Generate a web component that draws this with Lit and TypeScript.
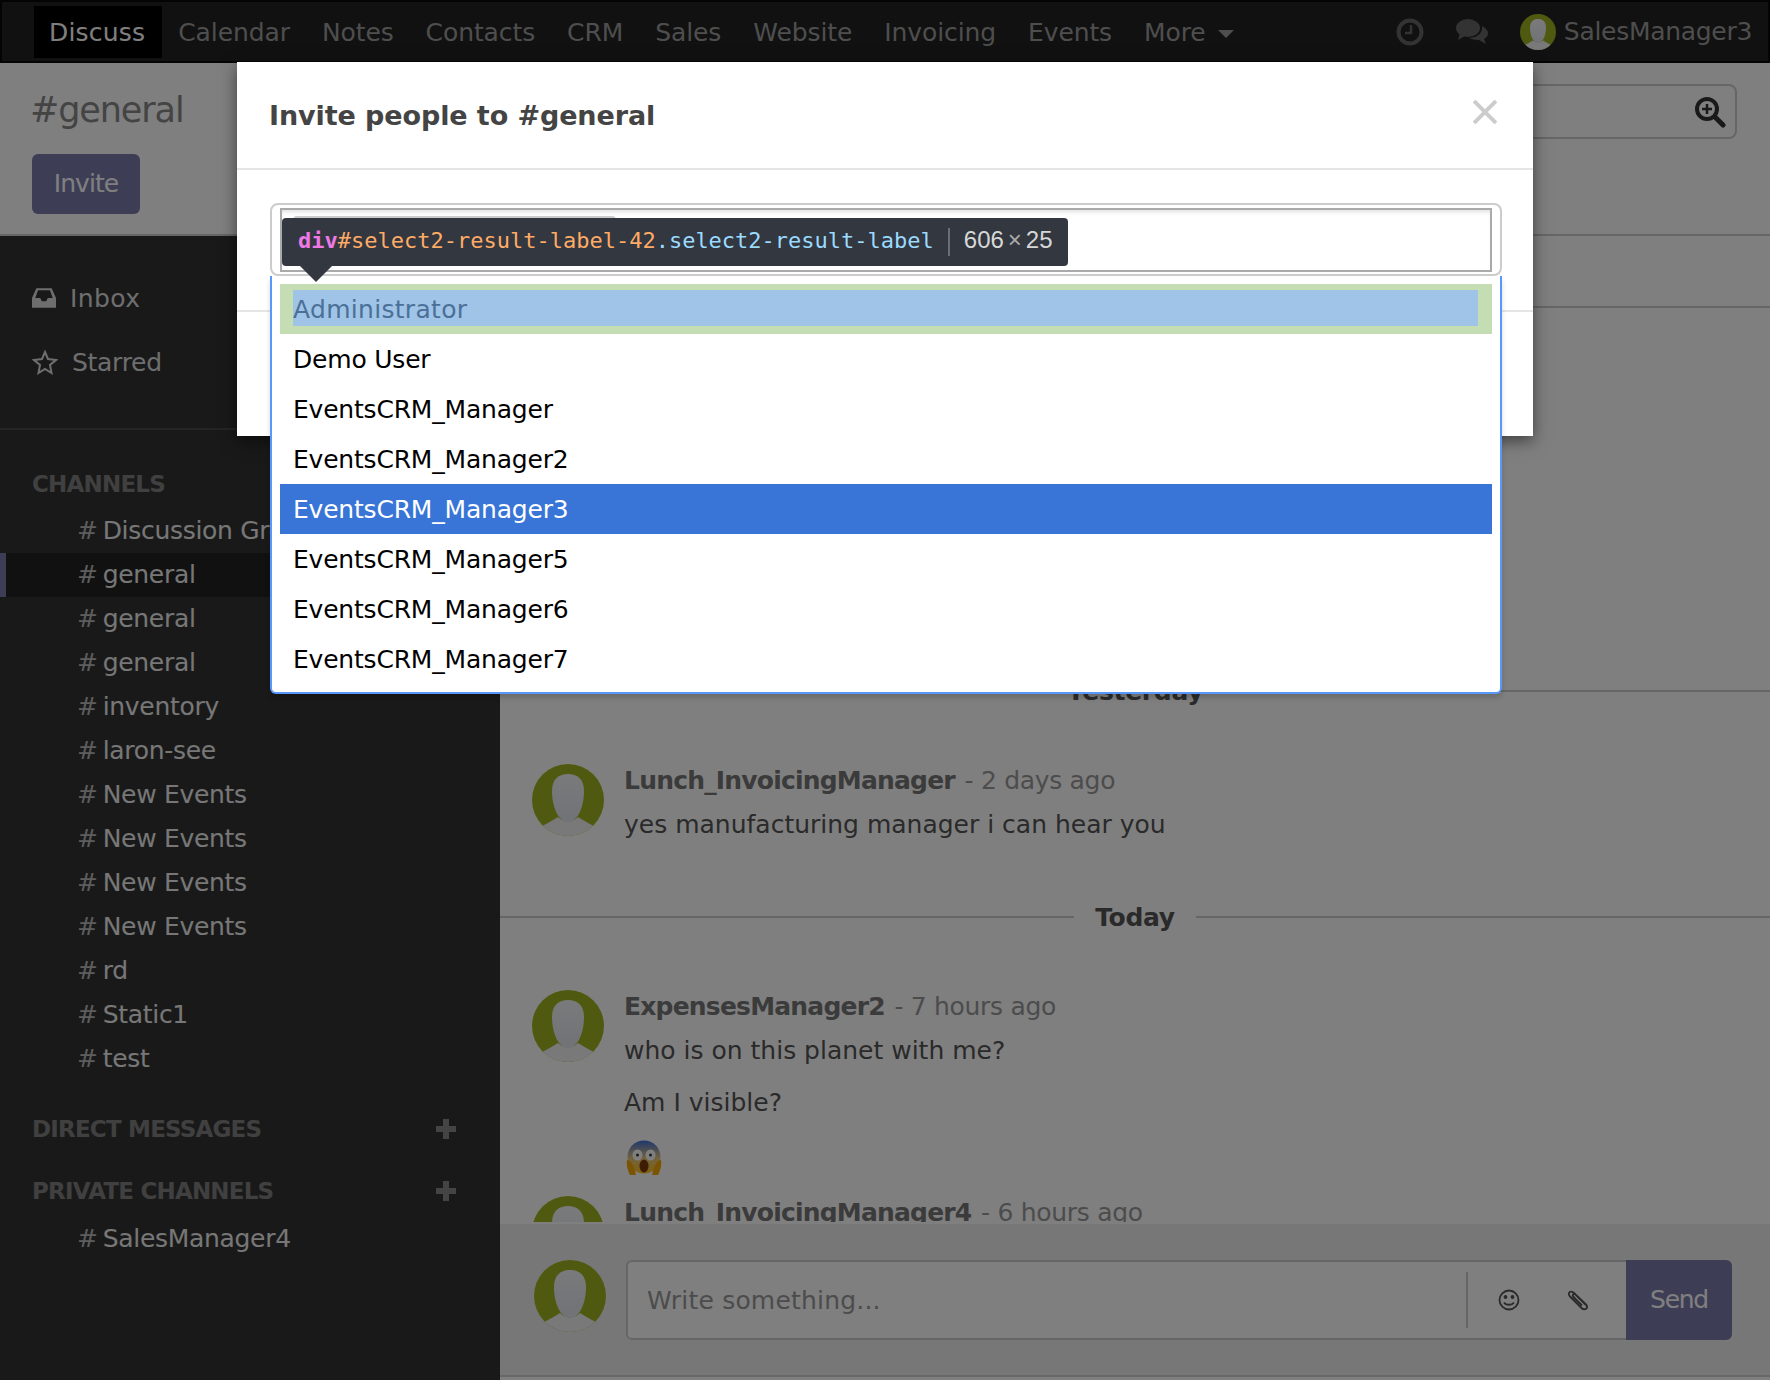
import { LitElement, html, css, svg } from 'lit';
import { customElement } from 'lit/decorators.js';

const avatar = (size: number) => html`
  <svg class="avatar" width=${size} height=${size} viewBox="0 0 72 72">
    ${svg`
      <defs>
        <linearGradient id="face" x1="0" y1="0" x2="0" y2="1">
          <stop offset="0" stop-color="#f4f5f8" />
          <stop offset="1" stop-color="#e2e5ec" />
        </linearGradient>
      </defs>
      <rect width="72" height="72" fill="#9eb420" />
      <path d="M0 72V67Q15 60 26 53Q36 62 46 53Q57 60 72 67V72Z" fill="#f2f2f5" />
      <path d="M20 27C20 15 27 10 36 10C45 10 52 15 52 27C52 42 46 58 36 58C26 58 20 42 20 27Z" fill="url(#face)" />
    `}
  </svg>
`;

const channels = ['Discussion Group', 'general', 'general', 'general', 'inventory', 'laron-see', 'New Events', 'New Events', 'New Events', 'New Events', 'rd', 'Static1', 'test'];
const navItems = ['Discuss', 'Calendar', 'Notes', 'Contacts', 'CRM', 'Sales', 'Website', 'Invoicing', 'Events'];
const options = ['Demo User', 'EventsCRM_Manager', 'EventsCRM_Manager2', 'EventsCRM_Manager3', 'EventsCRM_Manager5', 'EventsCRM_Manager6', 'EventsCRM_Manager7'];

@customElement('app-root')
export class AppRoot extends LitElement {
  static styles = css`
    :host {
      display: block;
      position: relative;
      width: 1770px;
      height: 1380px;
      overflow: hidden;
      font-family: 'DejaVu Sans', sans-serif;
      font-size: 25px;
      letter-spacing: -0.2px;
      background: #fff;
    }

    nav {
      display: flex;
      align-items: flex-start;
      height: 63px;
      box-sizing: border-box;
      padding: 4px 0 0 32px;
      background: #222;
      border: 2px solid #080808;
      color: #9d9d9d;
      letter-spacing: -0.1px;
    }
    .nav-item {
      height: 52px;
      line-height: 54px;
      padding: 0 16px;
    }
    .nav-item.active { background: #000; color: #fff; padding: 0 17px 0 15px; letter-spacing: 0.2px; }
    .caret {
      display: inline-block;
      margin-left: 12px;
      vertical-align: 3px;
      border-left: 8px solid transparent;
      border-right: 8px solid transparent;
      border-top: 8px solid #9d9d9d;
    }
    .nav-right { display: flex; align-items: center; margin-left: auto; height: 52px; margin-right: 16px; }
    .nav-right span { letter-spacing: -0.3px; line-height: 54px; }
    .nav-right .clock { margin-right: 32px; }
    .nav-right .chat { margin-right: 32px; }
    .nav-right .avatar { margin-right: 8px; }

    .avatar { display: block; flex: none; border-radius: 50%; }

    .top {
      display: flex;
      justify-content: space-between;
      height: 173px;
      box-sizing: border-box;
      padding: 22px 33px 0 32px;
      border-bottom: 2px solid #ccc;
    }
    .top h1 {
      margin: 0 0 0 -2px;
      font-size: 35px;
      font-weight: 400;
      letter-spacing: -1.1px;
      line-height: 50px;
      height: 46px;
      color: #888;
    }
    .invite {
      width: 108px;
      height: 60px;
      margin-top: 23px;
      line-height: 60px;
      text-align: center;
      letter-spacing: -0.95px;
      color: #fff;
      background: #7c7bad;
      border-radius: 6px;
    }
    .search {
      display: flex;
      align-items: center;
      justify-content: flex-end;
      width: 400px;
      height: 55px;
      margin-top: -1px;
      padding-right: 9px;
      box-sizing: border-box;
      border: 2px solid #ccc;
      border-radius: 8px;
    }

    .body { display: flex; height: 1144px; }

    aside {
      width: 500px;
      flex: none;
      box-sizing: border-box;
      padding-top: 30px;
      background: #333;
      color: #eee;
      letter-spacing: -0.3px;
    }
    .box-row {
      display: flex;
      align-items: center;
      height: 64px;
      padding-left: 32px;
      color: #ddd;
    }
    .box-row svg { width: 26px; margin-right: 14px; }
    .box-row.inbox { letter-spacing: 0.4px; }
    .box-row.inbox svg { width: 24px; margin-right: 14px; }
    .aside-rule { height: 2px; margin-top: 34px; background: #4a4a4a; }
    .heading {
      display: flex;
      justify-content: space-between;
      align-items: center;
      height: 44px;
      padding: 0 44px 0 32px;
      font-size: 23px;
      font-weight: 700;
      letter-spacing: -0.8px;
      color: #808080;
    }
    .heading.first { margin: 32px 0 3px; }
    .heading.direct { margin-top: 26px; }
    .heading.private { margin: 18px 0 4px; }
    .channel {
      position: relative;
      height: 44px;
      line-height: 44px;
      padding-left: 77px;
      white-space: nowrap;
    }
    .channel span { color: #bbb; margin-right: 5px; }
    .channel.active { background: #222; }
    .channel.active::before {
      content: '';
      position: absolute;
      left: 0;
      top: 0;
      bottom: 0;
      width: 6px;
      background: #7c7bad;
    }

    main { flex: 1; display: flex; flex-direction: column; min-width: 0; }
    .subbar { height: 72px; box-sizing: border-box; flex: none; border-bottom: 2px solid #ccc; }
    .thread {
      height: 916px;
      flex: none;
      box-sizing: border-box;
      padding-top: 361px;
      overflow: hidden;
      border-bottom: 2px solid #fff;
      color: #555;
    }
    .sep {
      display: flex;
      align-items: center;
      gap: 21px;
      height: 44px;
      font-weight: 700;
      letter-spacing: -0.3px;
      color: #555;
    }
    .sep::before, .sep::after { content: ''; flex: 1; height: 2px; background: #ccc; }
    .sep.today { margin-top: 53px; }
    .msg { display: flex; gap: 20px; padding-left: 32px; margin-top: 51px; }
    .msg.next { margin-top: 20px; }
    .msg-name { height: 34px; line-height: 34px; white-space: nowrap; color: #999; letter-spacing: -0.3px; }
    .msg-name b { color: #777; margin-right: 2px; letter-spacing: -0.8px; }
    .msg p { margin: 10px 0 0; line-height: 34px; height: 34px; letter-spacing: 0; }
    .msg p + p { margin-top: 18px; }
    .emoji { display: block; margin: 20px 0 0 2px; }

    .composer {
      display: flex;
      flex: none;
      gap: 20px;
      height: 153px;
      box-sizing: border-box;
      padding: 36px 38px 0 34px;
      background: #f0eeee;
      border-bottom: 2px solid #d0d0d0;
    }
    .input {
      flex: 1;
      display: flex;
      align-items: center;
      height: 80px;
      box-sizing: border-box;
      background: #fff;
      border: 2px solid #ccc;
      border-radius: 6px;
      color: #999;
    }
    .placeholder { flex: 1; padding-left: 19px; letter-spacing: 0.2px; }
    .input-rule { width: 2px; height: 56px; background: #ccc; }
    .icon-btn { display: flex; justify-content: center; align-items: center; }
    .icon-btn.smile { width: 81px; }
    .icon-btn.clip { width: 58px; margin-right: 19px; }
    .send {
      align-self: stretch;
      width: 106px;
      margin: -2px -2px -2px 0;
      line-height: 80px;
      text-align: center;
      letter-spacing: -1.3px;
      color: #fff;
      background: #7c7bad;
      border-radius: 0 6px 6px 0;
    }

    .overlay { position: absolute; inset: 0; background: rgba(0, 0, 0, 0.5); }

    .modal {
      position: absolute;
      left: 237px;
      top: 62px;
      width: 1296px;
      height: 374px;
      box-sizing: border-box;
      background: #fff;
      box-shadow: 0 5px 15px rgba(0, 0, 0, 0.5);
    }
    .modal-head {
      display: flex;
      align-items: center;
      justify-content: space-between;
      height: 106px;
      padding: 0 36px 0 32px;
      border-bottom: 2px solid #e5e5e5;
    }
    .modal-head h2 {
      margin: 0;
      font-size: 27px;
      font-weight: 700;
      letter-spacing: -0.1px;
      color: #444;
    }
    .modal-body { padding: 33px 31px 34px 33px; }
    .modal-foot { border-top: 2px solid #e5e5e5; }

    .select-wrap { position: relative; width: 1232px; height: 73px; }
    .select {
      height: 73px;
      box-sizing: border-box;
      padding: 3px 8px 0 8px;
      border: 2px solid #ccc;
      border-radius: 8px;
    }
    .select-input {
      height: 64px;
      box-sizing: border-box;
      padding: 6px 0 0 11px;
      border: 2px solid #aaa;
      box-shadow: inset 0 4px 4px -2px rgba(0, 0, 0, 0.12);
    }
    .chip {
      width: 323px;
      height: 40px;
      box-sizing: border-box;
      background: #e4e4e4;
      border: 2px solid #ccc;
      border-radius: 4px;
    }
    .drop {
      position: absolute;
      left: 0;
      right: 0;
      top: 73px;
      height: 418px;
      box-sizing: border-box;
      padding: 8px 8px 0 8px;
      background: #fff;
      border: 2px solid #5897fb;
      border-top: none;
      border-radius: 0 0 6px 6px;
      box-shadow: 0 4px 5px rgba(0, 0, 0, 0.15);
      color: #000;
    }
    .opt { height: 50px; line-height: 51px; padding-left: 13px; }
    .opt.hot { background: #3875d7; color: #fff; }
    .opt.inspected {
      box-sizing: border-box;
      padding: 6px 14px 8px 13px;
      background: #c4ddb3;
    }
    .opt.inspected div {
      height: 36px;
      line-height: 39px;
      letter-spacing: 0.3px;
      background: #9fc4e7;
      color: #4b7098;
    }

    .tip {
      position: absolute;
      left: 12px;
      top: 15px;
      display: flex;
      align-items: center;
      height: 48px;
      box-sizing: border-box;
      padding: 0 15px 4px 16px;
      background: #333740;
      border-radius: 4px;
      font-family: 'DejaVu Sans Mono', monospace;
      font-size: 22px;
      letter-spacing: 0;
      white-space: nowrap;
    }
    .tip::after {
      content: '';
      position: absolute;
      left: 18px;
      top: 48px;
      border-left: 16px solid transparent;
      border-right: 16px solid transparent;
      border-top: 16px solid #333740;
    }
    .t-tag { color: #ee78e6; font-weight: 700; }
    .t-id { color: #ffab66; }
    .t-cls { color: #9bdbff; }
    .t-rule { width: 2px; height: 28px; margin: 4px 14px 0; background: #6a6d75; }
    .t-size { font-family: 'Liberation Sans', sans-serif; font-size: 24px; color: #d7d7d7; }
    .t-size i { font-style: normal; color: #aaa; margin: 0 4px; }

    .close { display: block; margin-top: -6px; }
  `;

  render() {
    return html`
      <nav>
        ${navItems.map((n, i) => html`<div class="nav-item ${i === 0 ? 'active' : ''}">${n}</div>`)}
        <div class="nav-item">More<span class="caret"></span></div>
        <div class="nav-right">
          <svg class="clock" width="28" height="28" viewBox="0 0 28 28" fill="none" stroke="#666">
            <circle cx="14" cy="14" r="11.5" stroke-width="4" />
            <path d="M15 7v8H9" stroke-width="2.5" />
          </svg>
          <svg class="chat" width="32" height="28" viewBox="0 0 32 28" fill="#666">
            <ellipse cx="12" cy="10" rx="12" ry="9" />
            <path d="M4 15L2 22L11 17Z" />
            <path d="M26 8C30 10 32 13 32 15C32 18 30 20 28 21L30 26L23 22C19 22 15 21 13 20C20 20 27 16 26 8Z" />
          </svg>
          ${avatar(36)}
          <span>SalesManager3</span>
        </div>
      </nav>

      <div class="top">
        <div>
          <h1>#general</h1>
          <div class="invite">Invite</div>
        </div>
        <div class="search">
          <svg width="32" height="32" viewBox="0 0 32 32" fill="none" stroke="#333">
            <circle cx="13" cy="13" r="10" stroke-width="4" />
            <path d="M13 8v10M8 13h10" stroke-width="2.5" />
            <path d="M21 21l8 8" stroke-width="5" stroke-linecap="round" />
          </svg>
        </div>
      </div>

      <div class="body">
        <aside>
          <div class="box-row inbox">
            <svg width="24" height="20" viewBox="0 0 22 18" fill="#ddd" fill-rule="evenodd">
              <path d="M4 0H18L22 9V18H0V9ZM5.5 2L3 9H7.5L9 12H13L14.500 9H19L16.500 2Z" />
            </svg>
            Inbox
          </div>
          <div class="box-row">
            <svg width="26" height="26" viewBox="0 0 26 26" fill="none" stroke="#ddd" stroke-width="2">
              <path d="M13 3L16 10L24 11L18 16L19.500 24L13 20L6.500 24L8 16L2 11L10 10Z" />
            </svg>
            Starred
          </div>
          <div class="aside-rule"></div>

          <div class="heading first">CHANNELS</div>
          ${channels.map((c, i) => html`
            <div class="channel ${i === 1 ? 'active' : ''}"><span>#</span>${c}</div>
          `)}

          <div class="heading direct">
            DIRECT MESSAGES
            <svg width="20" height="20" viewBox="0 0 20 20" stroke="#888" stroke-width="6"><path d="M10 0v20M0 10h20" /></svg>
          </div>
          <div class="heading private">
            PRIVATE CHANNELS
            <svg width="20" height="20" viewBox="0 0 20 20" stroke="#888" stroke-width="6"><path d="M10 0v20M0 10h20" /></svg>
          </div>
          <div class="channel"><span>#</span>SalesManager4</div>
        </aside>

        <main>
          <div class="subbar"></div>
          <div class="thread">
            <div class="sep">Yesterday</div>
            <div class="msg">
              ${avatar(72)}
              <div>
                <div class="msg-name"><b>Lunch_InvoicingManager</b> - 2 days ago</div>
                <p>yes manufacturing manager i can hear you</p>
              </div>
            </div>
            <div class="sep today">Today</div>
            <div class="msg">
              ${avatar(72)}
              <div>
                <div class="msg-name"><b>ExpensesManager2</b> - 7 hours ago</div>
                <p>who is on this planet with me?</p>
                <p>Am I visible?</p>
                <svg class="emoji" width="36" height="36" viewBox="0 0 36 36">
                  <defs>
                    <linearGradient id="scream" x1="0" y1="0" x2="0" y2="1">
                      <stop offset="0" stop-color="#3f6fd8" />
                      <stop offset="0.55" stop-color="#e8c87a" />
                      <stop offset="1" stop-color="#ffc21e" />
                    </linearGradient>
                  </defs>
                  <circle cx="18" cy="17" r="16.500" fill="url(#scream)" />
                  <ellipse cx="11.500" cy="15" rx="5" ry="5.500" fill="#fff" />
                  <ellipse cx="24.500" cy="15" rx="5" ry="5.500" fill="#fff" />
                  <circle cx="11.500" cy="15" r="1.500" fill="#333" />
                  <circle cx="24.500" cy="15" r="1.500" fill="#333" />
                  <ellipse cx="18" cy="26" rx="4.500" ry="6.500" fill="#7a3a08" />
                  <path d="M1 20C5 20 8 26 10 35H4C2 31 0 25 1 20Z" fill="#f5a800" />
                  <path d="M35 20C31 20 28 26 26 35H32C34 31 36 25 35 20Z" fill="#f5a800" />
                </svg>
              </div>
            </div>
            <div class="msg next">
              ${avatar(72)}
              <div>
                <div class="msg-name"><b>Lunch_InvoicingManager4</b> - 6 hours ago</div>
              </div>
            </div>
          </div>
          <div class="composer">
            ${avatar(72)}
            <div class="input">
              <div class="placeholder">Write something...</div>
              <div class="input-rule"></div>
              <div class="icon-btn smile">
                <svg width="22" height="22" viewBox="0 0 22 22" fill="none" stroke="#555" stroke-width="1.800">
                  <circle cx="11" cy="11" r="9.500" />
                  <path d="M6 13.500C8 16.500 14 16.500 16 13.500" />
                  <circle cx="7.500" cy="8" r="1" fill="#555" />
                  <circle cx="14.500" cy="8" r="1" fill="#555" />
                </svg>
              </div>
              <div class="icon-btn clip">
                <svg width="22" height="22" viewBox="0 0 22 22" fill="none" stroke="#555" stroke-width="1.800">
                  <path d="M19 16L7 4C5 2 2.500 2.500 2 4C1.500 5.500 2 6.500 3 7.500L14.500 19C16 20.500 18 20.500 19.500 19.500C20.500 18 20 16.500 19 15.500L8.500 5.500C7.500 4.500 6.500 5 6 5.500C5.500 6.500 6 7.500 6.500 8L15 16.500" />
                </svg>
              </div>
              <div class="send">Send</div>
            </div>
          </div>
        </main>
      </div>

      <div class="overlay"></div>

      <div class="modal">
        <div class="modal-head">
          <h2>Invite people to #general</h2>
          <svg class="close" width="24" height="24" viewBox="0 0 24 24" stroke="#ccc" stroke-width="4"><path d="M1 1L23 23M23 1L1 23" /></svg>
        </div>
        <div class="modal-body">
          <div class="select-wrap">
            <div class="select">
              <div class="select-input"><div class="chip"></div></div>
            </div>
            <div class="drop">
              <div class="opt inspected"><div>Administrator</div></div>
              ${options.map((o, i) => html`<div class="opt ${i === 3 ? 'hot' : ''}">${o}</div>`)}
            </div>
            <div class="tip">
              <span class="t-tag">div</span><span class="t-id">#select2-result-label-42</span><span class="t-cls">.select2-result-label</span>
              <span class="t-rule"></span>
              <span class="t-size">606<i>×</i>25</span>
            </div>
          </div>
        </div>
        <div class="modal-foot"></div>
      </div>
    `;
  }
}
